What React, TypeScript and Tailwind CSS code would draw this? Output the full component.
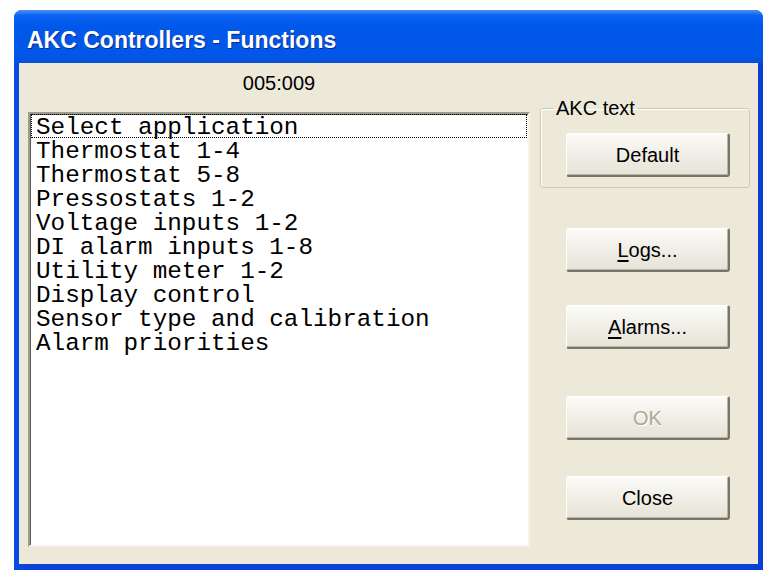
import React from 'react';

const items = [
  'Select application',
  'Thermostat 1-4',
  'Thermostat 5-8',
  'Pressostats 1-2',
  'Voltage inputs 1-2',
  'DI alarm inputs 1-8',
  'Utility meter 1-2',
  'Display control',
  'Sensor type and calibration',
  'Alarm priorities',
];

function XpButton({ children, disabled, className = '' }: { children: React.ReactNode; disabled?: boolean; className?: string }) {
  return (
    <button
      className={
        'w-[164px] h-[44px] flex items-center justify-center rounded-[3px] border-t border-l border-r-2 border-b-2 border-t-white border-l-white border-r-[#777569] border-b-[#777569] shadow-[inset_-1px_-1px_0_#b9b6a7] bg-[linear-gradient(to_bottom,#fbfbf8_0%,#f1efe7_45%,#e6e3d7_100%)] text-[20px] leading-[20px] ' +
        (disabled ? 'text-[#aca899] [text-shadow:1px_1px_0_#ffffff] ' : 'text-black ') +
        className
      }
    >
      {children}
    </button>
  );
}

export default function App() {
  return (
    <div className="min-h-[580px] bg-white pt-[10px] pl-[14px] font-['Liberation_Sans',Arial,sans-serif]">
      <div className="w-[749px] h-[560px] flex flex-col rounded-t-[8px] overflow-hidden bg-[linear-gradient(to_right,#0a4ce0,#0842d9_2%,#0842d9_98%,#0a3fd0)]">
        {/* title bar */}
        <div className="h-[53px] shrink-0 flex items-center pl-[13px] pt-[6px] bg-[linear-gradient(to_bottom,#4a93f6_0%,#0d63f2_10%,#0058ec_30%,#0056e6_60%,#0157ea_85%,#0a4ed8_100%)]">
          <span className="text-white font-bold text-[23px] leading-[26px] [text-shadow:1px_1px_0_#0c2a8a]">
            AKC Controllers - Functions
          </span>
        </div>

        {/* client */}
        <div className="flex-1 flex mx-[5px] mb-[6px] bg-[#ece9d8] pl-[9px] pr-[8px]">
          <div className="w-[502px] flex flex-col pt-[10px] pb-[17px]">
            <div className="h-[20px] text-center text-[20px] leading-[20px] text-black">005:009</div>
            <div className="mt-[19px] flex-1 bg-white border-2 border-t-[#9d9a8e] border-l-[#9d9a8e] border-r-[#f4f2ea] border-b-[#f4f2ea] shadow-[inset_1px_1px_0_#5f5d55]">
              <ul className="font-['Liberation_Mono','Courier_New',monospace] text-[24.3px] text-black">
                {items.map((t, i) => (
                  <li
                    key={t}
                    className={
                      'h-[24px] mx-[1px] whitespace-pre ' +
                      (i === 0 ? 'border border-dotted border-black pl-[4px] leading-[26px]' : 'pl-[5px] leading-[28px]')
                    }
                  >
                    {t}
                  </li>
                ))}
              </ul>
            </div>
          </div>

          <div className="w-[210px] ml-[10px] flex flex-col pt-[35px]">
            <fieldset className="border border-[#cdcab9] rounded-[3px] pl-[25px] pr-[19px] pb-[10px] shadow-[inset_1px_1px_0_#ffffff]">
              <legend className="-ml-[12px] px-[2px] text-[20px] leading-[20px] text-black">AKC text</legend>
              <XpButton className="mt-[15px]">Default</XpButton>
            </fieldset>
            <XpButton className="mt-[40px] ml-[26px]">
              <span>
                <span className="underline underline-offset-[3px]">L</span>ogs...
              </span>
            </XpButton>
            <XpButton className="mt-[33px] ml-[26px]">
              <span>
                <span className="underline underline-offset-[3px]">A</span>larms...
              </span>
            </XpButton>
            <XpButton disabled className="mt-[47px] ml-[26px]">
              OK
            </XpButton>
            <XpButton className="mt-[36px] ml-[26px]">Close</XpButton>
          </div>
        </div>
      </div>
    </div>
  );
}
